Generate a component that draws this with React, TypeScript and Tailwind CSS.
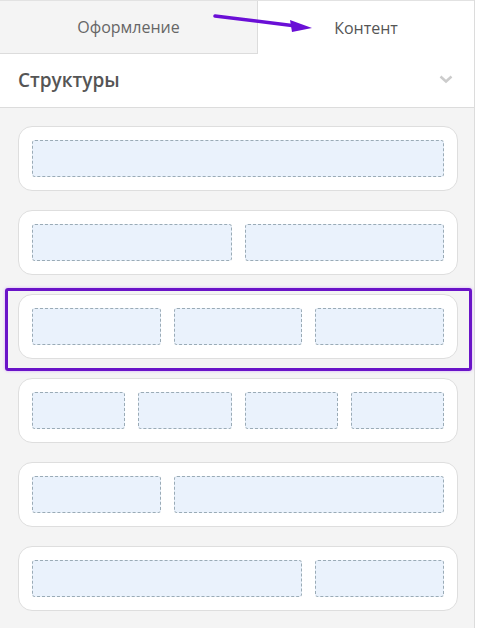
import React from "react";

function Box() {
  return <div className="h-[37px] rounded-[3px] border border-dashed border-[#9aabb6] bg-[#eaf2fc]" />;
}

function Card({ cols, spans }: { cols: string; spans: string[] }) {
  return (
    <div className="h-[65px] w-[440px] rounded-[14px] border border-[#dedede] bg-white p-[13px]">
      <div className={`grid ${cols} gap-[13px]`}>
        {spans.map((s, i) => (
          <div key={i} className={s}>
            <Box />
          </div>
        ))}
      </div>
    </div>
  );
}

export default function App() {
  return (
    <div
      className="relative h-[628px] w-[479px] overflow-hidden bg-white"
      style={{ fontFamily: '"Open Sans", "Noto Sans", sans-serif' }}
    >
      <div className="flex h-full w-[475px] flex-col border-r border-[#dcdcdc] bg-[#f4f4f4]">
        <div className="flex h-[54px] border-t border-[#e2e2e2]">
          <div className="flex w-[258px] items-center justify-center border-b border-r border-[#dcdcdc] bg-[#f4f4f4] text-[16px] text-[#666]">
            Оформление
          </div>
          <div className="flex flex-1 items-center justify-center bg-white text-[16px] text-[#555]">
            Контент
          </div>
        </div>
        <div className="flex h-[54px] items-center justify-between border-b border-[#dcdcdc] bg-white pl-[18px] pr-[21px]">
          <span className="text-[19px] font-semibold text-[#555]">Структуры</span>
          <svg width="14" height="9" viewBox="0 0 14 9" className="-mt-[3px]">
            <path d="M1.5 1.5 L7 6.5 L12.5 1.5" fill="none" stroke="#cccccc" strokeWidth="2.5" />
          </svg>
        </div>
        <div className="flex flex-col gap-[19px] pl-[18px] pt-[18px]">
          <Card cols="grid-cols-1" spans={["col-span-1"]} />
          <Card cols="grid-cols-2" spans={["col-span-1", "col-span-1"]} />
          <Card cols="grid-cols-3" spans={["col-span-1", "col-span-1", "col-span-1"]} />
          <Card cols="grid-cols-4" spans={["col-span-1", "col-span-1", "col-span-1", "col-span-1"]} />
          <Card cols="grid-cols-3" spans={["col-span-1", "col-span-2"]} />
          <Card cols="grid-cols-3" spans={["col-span-2", "col-span-1"]} />
        </div>
      </div>

      {/* annotation: highlight */}
      <div className="absolute left-[5px] top-[288px] h-[83px] w-[467px] rounded-[3px] border-[3px] border-[#6a14c8] shadow-[0_0_3px_rgba(200,120,255,0.6)]" />

      {/* annotation: arrow */}
      <svg className="absolute left-0 top-0" width="479" height="60" viewBox="0 0 479 60">
        <path d="M215 16 L296 26" stroke="#6a0fd6" strokeWidth="3.5" strokeLinecap="round" fill="none" />
        <path d="M290 20 L312 28 L292 32 Z" fill="#6a0fd6" />
      </svg>
    </div>
  );
}
